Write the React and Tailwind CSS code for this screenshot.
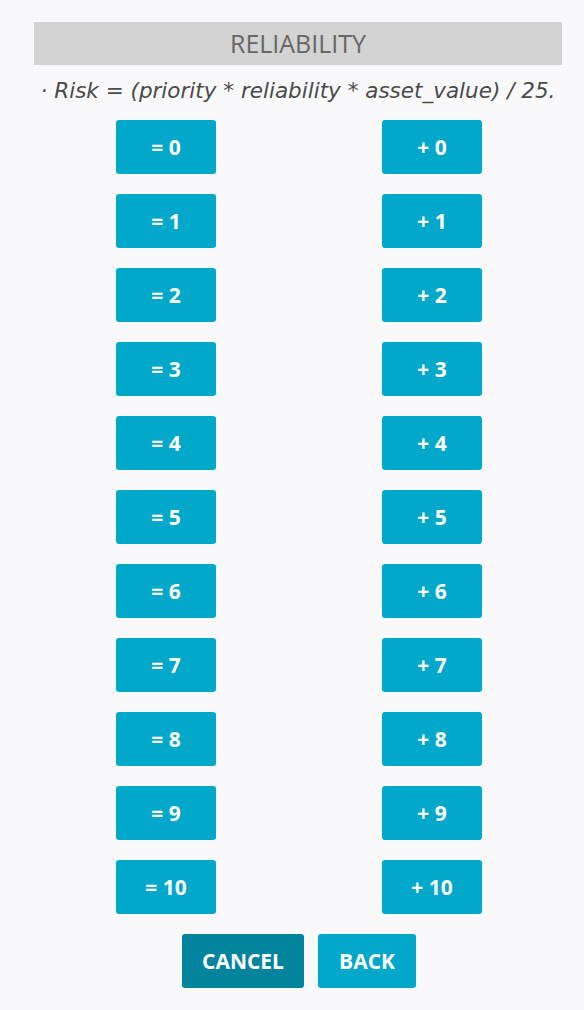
import React from "react";

const values = [0, 1, 2, 3, 4, 5, 6, 7, 8, 9, 10];

// Single value button
const ValueButton = ({ label }) => (
  <div className="flex justify-center">
    <button className="w-[100px] h-[54px] pt-[2px] rounded-[3px] bg-[#02a8c9] text-white text-[21px] font-bold">
      {label}
    </button>
  </div>
);

export default function App() {
  return (
    <div className="min-h-screen bg-[#f9f9fb] pt-[22px] font-['Open_Sans',sans-serif]">
      <div className="w-[528px] ml-[34px]">
        {/* Header */}
        <div className="h-[43px] bg-[#d3d3d3] flex items-center justify-center text-[25px] text-[#666]">
          RELIABILITY
        </div>
        <p className="mt-[13px] text-center italic text-[21.5px] text-[#4a4a4a] leading-[26px] whitespace-nowrap font-['DejaVu_Sans',sans-serif]">
          · Risk = (priority * reliability * asset_value) / 25.
        </p>

        {/* Value grid */}
        <div className="grid grid-cols-[264px_268px] gap-y-[20px] mt-[16px]">
          {values.map((v) => (
            <React.Fragment key={v}>
              <ValueButton label={`= ${v}`} />
              <ValueButton label={`+ ${v}`} />
            </React.Fragment>
          ))}
        </div>

        {/* Footer */}
        <div className="flex justify-center gap-[14px] mt-[20px] pl-[2px]">
          <button className="w-[122px] h-[54px] pt-[2px] rounded-[3px] bg-[#02849e] text-white text-[21px] font-bold">
            CANCEL
          </button>
          <button className="w-[98px] h-[54px] pt-[2px] rounded-[3px] bg-[#02a8c9] text-white text-[21px] font-bold">
            BACK
          </button>
        </div>
      </div>
    </div>
  );
}
